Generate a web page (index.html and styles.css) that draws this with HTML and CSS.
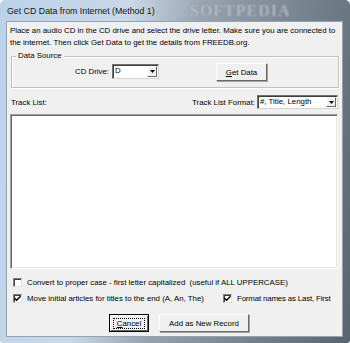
FILE: index.html
```html
<!DOCTYPE html>
<html>
<head>
<meta charset="utf-8">
<link rel="stylesheet" href="styles.css">
</head>
<body>
<div class="window">
  <div class="titlebar">
    <span class="title">Get CD Data from Internet (Method 1)</span>
    <span class="watermark">SOFTPEDIA</span>
  </div>
  <div class="client">
    <p class="intro">Place an audio CD in the CD drive and select the drive letter. Make sure you are connected to the internet. Then click Get Data to get the details from FREEDB.org.</p>
    <fieldset class="group">
      <legend>Data Source</legend>
      <div class="source-row">
        <span class="drive-label">CD Drive:</span>
        <div class="combo drive-combo"><span class="combo-value">D</span><span class="combo-btn"><svg width="5" height="3" viewBox="0 0 5 3"><path d="M0 0h5L2.5 3z" fill="#000"/></svg></span></div>
        <button class="btn get-btn"><u>G</u>et Data</button>
      </div>
    </fieldset>
    <div class="track-row">
      <span>Track List:</span>
      <div class="format">
        <span>Track List Format:</span>
        <div class="combo format-combo"><span class="combo-value">#, Title, Length</span><span class="combo-btn"><svg width="5" height="3" viewBox="0 0 5 3"><path d="M0 0h5L2.5 3z" fill="#000"/></svg></span></div>
      </div>
    </div>
    <div class="listbox"></div>
    <div class="check-row">
      <label class="check"><span class="box"></span>Convert to proper case - first letter capitalized&nbsp; (useful if ALL UPPERCASE)</label>
    </div>
    <div class="check-row two">
      <label class="check"><span class="box checked"><svg width="7" height="7" viewBox="0 0 7 7"><path d="M0.5 3.2 L2.6 5.3 L6.5 1.2" stroke="#000" stroke-width="1.4" fill="none"/></svg></span>Move initial articles for titles to the end (A, An, The)</label>
      <label class="check"><span class="box checked"><svg width="7" height="7" viewBox="0 0 7 7"><path d="M0.5 3.2 L2.6 5.3 L6.5 1.2" stroke="#000" stroke-width="1.4" fill="none"/></svg></span><span class="fmt">Format names as Last, First</span></label>
    </div>
    <div class="button-row">
      <button class="btn default-btn"><span class="focus"><u>C</u>ancel</span></button>
      <button class="btn add-btn">Add as New Record</button>
    </div>
  </div>
</div>
</body>
</html>
```
FILE: styles.css
```css
html, body {
  margin: 0;
  padding: 0;
  background: #ffffff;
}
body {
  font-family: "Liberation Sans", Arial, sans-serif;
}
.window {
  width: 350px;
  height: 343px;
  box-sizing: border-box;
  padding: 0 7px 6px 6px;
  display: flex;
  flex-direction: column;
  background: linear-gradient(100deg, #bcd2ea 0%, #c9d8e8 32%, #97a3af 50%, #7a8692 72%, #58646f 100%);
  border-radius: 5px 5px 3px 3px;
  overflow: hidden;
  position: relative;
}
.titlebar {
  height: 21px;
  display: flex;
  align-items: center;
  position: relative;
}
.title {
  font-size: 8.8px;
  color: #151515;
  padding-left: 1px;
  padding-top: 1px;
}
.watermark {
  position: absolute;
  left: 184px;
  top: 2px;
  font-size: 16px;
  font-weight: bold;
  letter-spacing: 1px;
  color: rgba(240, 244, 248, 0.6);
  text-shadow: 0 0 2px rgba(60, 70, 80, 0.6);
  filter: blur(1.2px);
  font-family: "Liberation Serif", serif;
}
.client {
  flex: 1;
  background: #f0f0f0;
  border: 1px solid #93a3b3;
  padding: 3px 3px 0 3px;
  display: flex;
  flex-direction: column;
  font-size: 7.85px;
  color: #000;
}
.intro {
  margin: 0;
  line-height: 12px;
  height: 24px;
}
.group {
  margin: 2px 0 0 1px;
  padding: 2px 0 6px 0;
  border: 1px solid #c2c2c2;
  box-shadow: inset 1px 1px 0 #ffffff, 1px 1px 0 #ffffff;
  min-width: 0;
}
.group legend {
  padding: 0 2px;
  margin-left: 4px;
  line-height: 10px;
  font-size: 7.85px;
}
.source-row {
  display: flex;
  align-items: flex-start;
  height: 18px;
}
.drive-label {
  width: 97px;
  text-align: right;
  margin-right: 3px;
  line-height: 17px;
}
.combo {
  display: flex;
  background: #fff;
  border-top: 1px solid #707070;
  border-left: 1px solid #707070;
  border-right: 1px solid #d4d4d4;
  border-bottom: 1px solid #d4d4d4;
  box-shadow: inset 1px 1px 0 #404040;
  box-sizing: border-box;
  align-items: stretch;
}
.drive-combo {
  width: 47px;
  height: 15px;
  margin-top: 1px;
}
.combo-value {
  flex: 1;
  padding-left: 2px;
  line-height: 12px;
  white-space: nowrap;
  overflow: hidden;
}
.combo-btn {
  width: 10px;
  margin: 1px 1px 1px 0;
  background: #f0f0f0;
  border-top: 1px solid #ffffff;
  border-left: 1px solid #ffffff;
  border-right: 1px solid #696969;
  border-bottom: 1px solid #696969;
  box-sizing: border-box;
  display: flex;
  align-items: center;
  justify-content: center;
}
.btn {
  font-family: "Liberation Sans", Arial, sans-serif;
  font-size: 7.85px;
  color: #000;
  background: #f0f0f0;
  padding: 0;
  margin: 0;
  border-top: 1px solid #ffffff;
  border-left: 1px solid #ffffff;
  border-right: 1px solid #696969;
  border-bottom: 1px solid #696969;
  box-shadow: 1px 1px 0 #a0a0a0;
  box-sizing: border-box;
}
.get-btn {
  width: 51px;
  height: 18px;
  margin-left: 57px;
}
.track-row {
  margin-top: 7px;
  height: 14px;
  display: flex;
  align-items: center;
  justify-content: space-between;
  padding-left: 1px;
  padding-right: 1px;
}
.format {
  display: flex;
  align-items: center;
  gap: 2px;
}
.format-combo {
  width: 81px;
  height: 14px;
}
.format-combo .combo-value {
  line-height: 11px;
}
.listbox {
  margin-top: 5px;
  margin-right: 1px;
  height: 155px;
  background: #fff;
  border-top: 1px solid #a0a0a0;
  border-left: 1px solid #a0a0a0;
  border-right: 1px solid #ffffff;
  border-bottom: 1px solid #ffffff;
  box-shadow: inset 1px 1px 0 #696969, inset -1px -1px 0 #e3e3e3;
  box-sizing: border-box;
}
.check-row {
  height: 12px;
  display: flex;
  align-items: center;
  margin-top: 7px;
}
.check-row.two {
  margin-top: 4px;
  display: grid;
  grid-template-columns: 210px 1fr;
}
.check {
  display: flex;
  align-items: center;
  white-space: nowrap;
}
.fmt {
  letter-spacing: -0.15px;
}
.box {
  width: 9px;
  height: 9px;
  box-sizing: border-box;
  margin-left: 3px;
  margin-right: 5px;
  background: #fff;
  border-top: 1px solid #808080;
  border-left: 1px solid #808080;
  border-right: 1px solid #e0e0e0;
  border-bottom: 1px solid #e0e0e0;
  box-shadow: inset 1px 1px 0 #404040;
  display: flex;
  align-items: center;
  justify-content: center;
}
.button-row {
  margin-top: 10px;
  display: flex;
  gap: 10px;
  padding-left: 99px;
}
.default-btn {
  width: 40px;
  height: 18px;
  border: 1px solid #000;
  box-shadow: inset 1px 1px 0 #fff, inset -1px -1px 0 #696969;
  display: flex;
  align-items: center;
  justify-content: center;
}
.focus {
  border: 1px dotted #000;
  padding: 0 3px;
  line-height: 9px;
}
.add-btn {
  width: 90px;
  height: 18px;
}
```
